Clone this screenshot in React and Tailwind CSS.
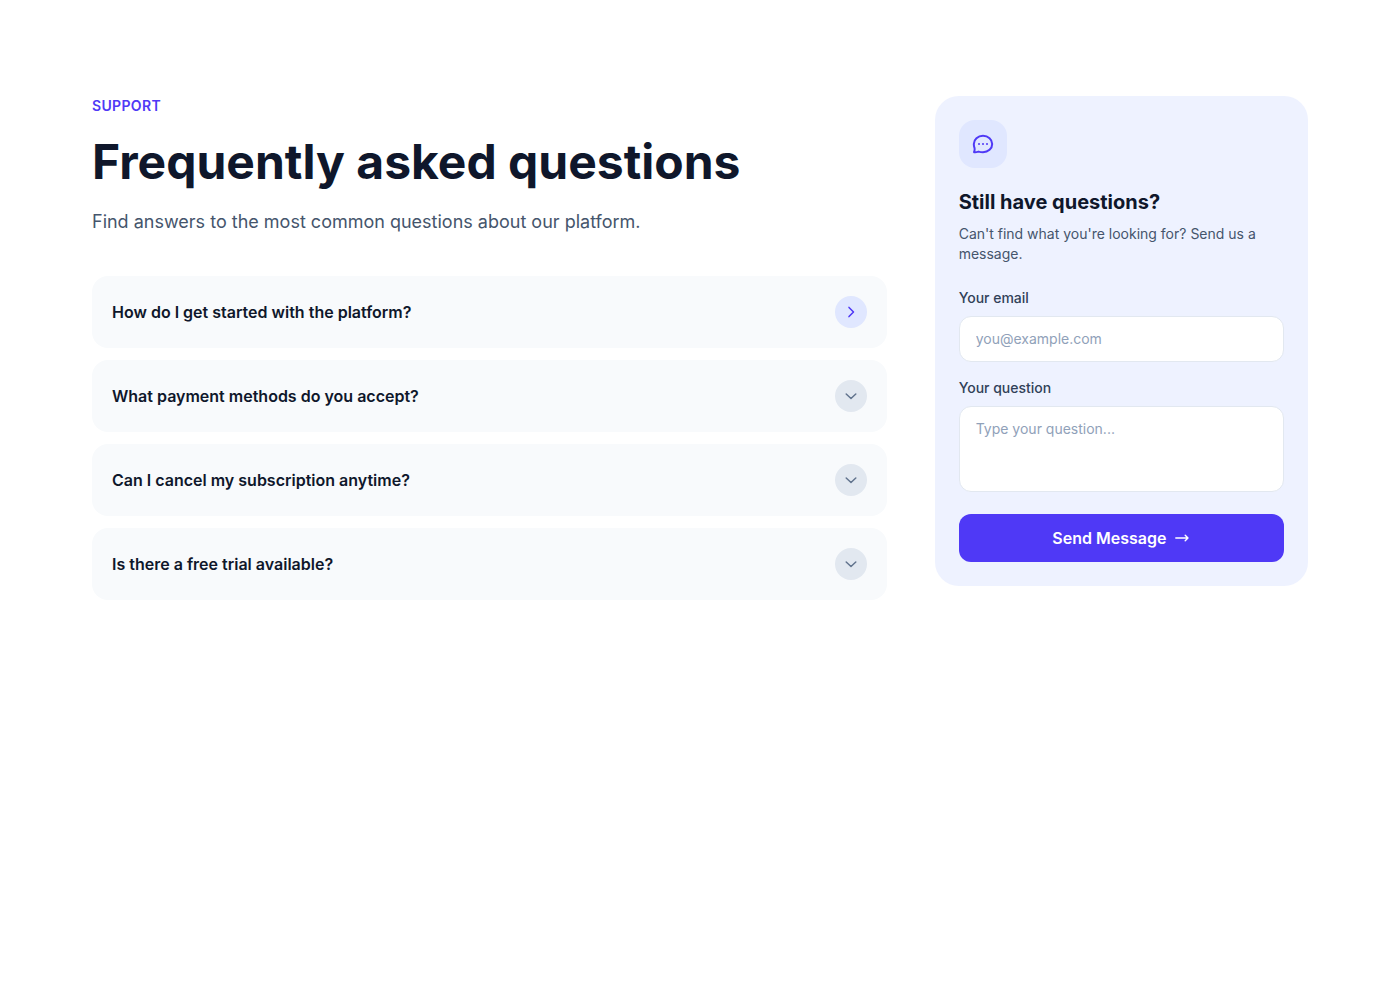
import React, { useState } from 'react';

const faqs = [
  { question: 'How do I get started with the platform?', highlighted: true },
  { question: 'What payment methods do you accept?' },
  { question: 'Can I cancel my subscription anytime?' },
  { question: 'Is there a free trial available?' },
];

const ChatIcon = () => (
  <svg className="w-6 h-6" fill="none" stroke="currentColor" viewBox="0 0 24 24">
    <path strokeLinecap="round" strokeLinejoin="round" strokeWidth="2"
      d="M12 20.2C17.2 20.2 21.2 16.6 21.2 12C21.2 7.4 17.2 3.8 12 3.8C6.8 3.8 2.8 7.4 2.8 12C2.8 14 3.2 15.2 3.6 16.4C3.9 17.6 3.5 19 3 20.2C4.8 20.6 6.4 20 7.6 19.6C9 20 10.4 20.2 12 20.2Z" />
    <path strokeLinecap="round" strokeWidth="2" d="M8 12h.01M12 12h.01M16 12h.01" />
  </svg>
);

const ChevronIcon = ({ right }) => (
  <svg className="w-4 h-4" fill="none" stroke="currentColor" viewBox="0 0 16 16">
    <path strokeLinecap="round" strokeLinejoin="round" strokeWidth="1.5"
      d={right ? 'M6 3.4L10.5 8L6 12.6' : 'M3.2 6L8 10.5L12.8 6'} />
  </svg>
);

const ArrowIcon = () => (
  <svg className="w-4 h-4" fill="none" stroke="currentColor" viewBox="0 0 16 16">
    <path strokeLinecap="round" strokeLinejoin="round" strokeWidth="1.4" d="M1.8 8h12.2M11.2 5.2L14 8L11.2 10.8" />
  </svg>
);

const FaqItem = ({ question, highlighted }) => (
  <button className="w-full flex items-center justify-between p-5 rounded-2xl bg-slate-50 text-left">
    <span className="font-semibold text-slate-900">{question}</span>
    <span className={`w-8 h-8 rounded-full flex items-center justify-center shrink-0 ${highlighted
      ? 'bg-indigo-100 text-indigo-600'
      : 'bg-slate-200 text-slate-500'}`}>
      <ChevronIcon right={highlighted} />
    </span>
  </button>
);

const ContactCard = () => {
  const [email, setEmail] = useState('');
  const [message, setMessage] = useState('');

  return (
    <div className="rounded-3xl bg-indigo-50 p-6">
      <div className="w-12 h-12 mb-5 rounded-2xl bg-indigo-100 text-indigo-600 flex items-center justify-center">
        <ChatIcon />
      </div>
      <h3 className="text-xl font-bold text-slate-900 mb-2">Still have questions?</h3>
      <p className="text-sm text-slate-600 mb-6">Can't find what you're looking for? Send us a message.</p>

      <form onSubmit={(e) => e.preventDefault()}>
        <div className="mb-4">
          <label htmlFor="email" className="block text-sm font-medium text-slate-700 mb-2">Your email</label>
          <input id="email" type="email" value={email} onChange={(e) => setEmail(e.target.value)}
            placeholder="you@example.com"
            className="block w-full px-4 py-3 rounded-xl border border-slate-200 bg-white text-sm placeholder:text-slate-400" />
        </div>
        <div className="mb-[22px]">
          <label htmlFor="question" className="block text-sm font-medium text-slate-700 mb-2">Your question</label>
          <textarea id="question" rows={3} value={message} onChange={(e) => setMessage(e.target.value)}
            placeholder="Type your question..."
            className="block w-full px-4 py-3 rounded-xl border border-slate-200 bg-white text-sm placeholder:text-slate-400 resize-none" />
        </div>
        <button type="submit"
          className="w-full py-3 rounded-xl bg-indigo-600 text-white font-semibold flex items-center justify-center gap-2">
          Send Message
          <ArrowIcon />
        </button>
      </form>
    </div>
  );
};

export default function App() {
  return (
    <section className="min-h-screen bg-white py-24 font-['Inter',sans-serif] antialiased">
      <div className="max-w-7xl mx-auto px-8">
        <div className="grid grid-cols-3 gap-12 items-start">

          {/* FAQ list */}
          <div className="col-span-2">
            <p className="text-sm font-semibold uppercase tracking-wide text-indigo-600">Support</p>
            <h2 className="mt-4 text-5xl leading-tight font-bold text-slate-900">Frequently asked questions</h2>
            <p className="mt-4 mb-10 text-lg text-slate-600">
              Find answers to the most common questions about our platform.
            </p>
            <div className="space-y-3">
              {faqs.map((faq) => (
                <FaqItem key={faq.question} {...faq} />
              ))}
            </div>
          </div>

          {/* Contact form */}
          <ContactCard />
        </div>
      </div>
    </section>
  );
}
